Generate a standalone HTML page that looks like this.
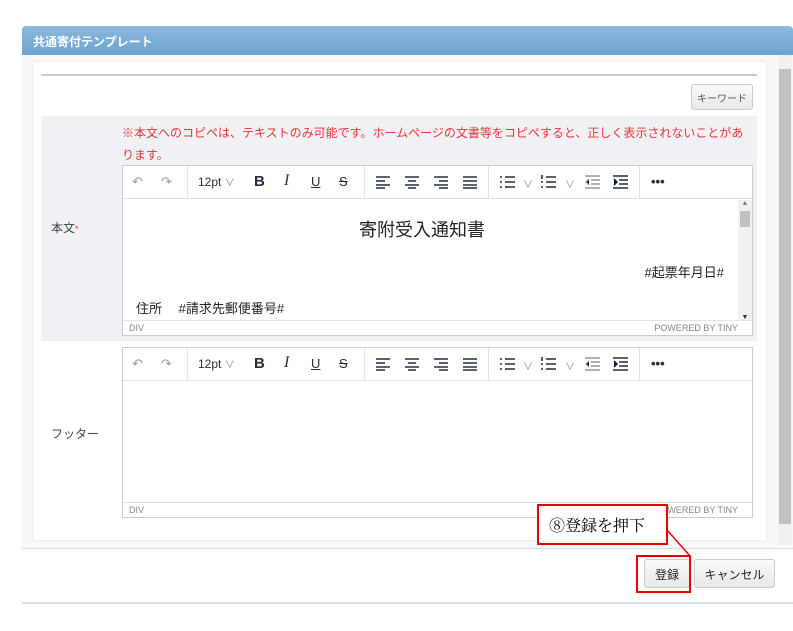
<!DOCTYPE html>
<html><head><meta charset="utf-8"><style>
*{box-sizing:border-box;margin:0;padding:0}
body{width:793px;height:631px;background:#fff;font-family:"Liberation Sans","Noto Sans CJK JP",sans-serif;position:relative;overflow:hidden;color:#222}
.a{position:absolute}
.hdr{left:22px;top:26px;width:771px;height:29px;background:linear-gradient(#8db9dd,#6da3d0);border-radius:4px 4px 0 0;color:#fff;font-size:12px;font-weight:bold;padding:7px 0 0 11px}
.ed{background:#fff;border:1px solid #ccc}
.tb{height:33px;border-bottom:1px solid #e3e3e3;position:relative;font-size:13px;color:#222f3e}
.tb span{position:absolute;top:8px}
.tb svg{position:absolute;top:9px}
.sep{position:absolute;top:0;width:1px;height:33px;background:#e3e3e3}
.st{position:absolute;left:0;right:0;bottom:0;height:15px;border-top:1px solid #e3e3e3;font-size:9px;color:#888;padding:2px 6px}
.st b{font-weight:normal;position:absolute;right:14px;top:2px}
.btn{border:1px solid #ccc;border-radius:3px;background:linear-gradient(#fafafa,#e8e8e8);font-size:12px;text-align:center}
</style></head><body>
<div class="a hdr">共通寄付テンプレート</div>
<div class="a" style="left:22px;top:55px;width:771px;height:493px;background:#f7f8fa"></div>
<div class="a" style="left:33px;top:62px;width:733px;height:478px;background:#fff;box-shadow:0 0 2px #ddd"></div>
<div class="a" style="left:41px;top:74px;width:716px;height:2px;background:#ccc"></div>
<div class="a btn" style="left:691px;top:84px;width:62px;height:26px;padding-top:5px;font-size:10px;color:#555">キーワード</div>
<div class="a" style="left:41px;top:116px;width:716px;height:225px;background:#f0f1f5"></div>
<div class="a" style="left:122px;top:122px;width:630px;font-size:12px;line-height:22px;color:#e33">※本文へのコピペは、テキストのみ可能です。ホームページの文書等をコピペすると、正しく表示されないことがあります。</div>
<div class="a" style="left:51px;top:219px;font-size:12px;color:#444">本文<span style="color:#e33;font-size:9px">*</span></div>
<div class="a" style="left:51px;top:425px;font-size:12px;color:#444">フッター</div>

<div class="a ed" style="left:122px;top:165px;width:631px;height:171px">
<div class="tb" id="tb1">
<span style="left:9px;color:#999">↶</span><span style="left:38px;color:#999">↷</span><div class="sep" style="left:64px"></div>
<span style="left:75px;font-size:12px">12pt <small style="color:#888">∨</small></span>
<span style="left:131px;font-weight:bold;font-size:15px;top:7px">B</span><span style="left:161px;font-style:italic;font-family:'Liberation Serif';font-size:16px;top:6px">I</span><span style="left:188px;text-decoration:underline">U</span><span style="left:216px;text-decoration:line-through">S</span>
<div class="sep" style="left:241px"></div>
<svg style="left:253px" width="14" height="14" stroke="#222f3e" stroke-width="1.6"><path d="M0 2h14M0 6h9M0 10h14M0 13h9"/></svg>
<svg style="left:282px" width="14" height="14" stroke="#222f3e" stroke-width="1.6"><path d="M0 2h14M3 6h8M0 10h14M3 13h8"/></svg>
<svg style="left:311px" width="14" height="14" stroke="#222f3e" stroke-width="1.6"><path d="M0 2h14M5 6h9M0 10h14M5 13h9"/></svg>
<svg style="left:340px" width="14" height="14" stroke="#222f3e" stroke-width="1.6"><path d="M0 2h14M0 6h14M0 10h14M0 13h14"/></svg>
<div class="sep" style="left:365px"></div>
<svg style="left:377px" width="15" height="14" stroke="#222f3e" stroke-width="1.6"><path d="M0 2h2M5 2h10M0 7h2M5 7h10M0 12h2M5 12h10"/></svg>
<span style="left:400px;color:#888;font-size:10px;top:10px">∨</span>
<svg style="left:418px" width="15" height="14" stroke="#222f3e" stroke-width="1.6"><path d="M1 0v4M0 7h2M0 12h2M5 2h10M5 7h10M5 12h10"/></svg>
<span style="left:442px;color:#888;font-size:10px;top:10px">∨</span>
<svg style="left:462px" width="15" height="14" stroke="#999" stroke-width="1.4"><path d="M0 1h15M6 5h9M6 9h9M0 13h15M4 4L1 7l3 3"/></svg>
<svg style="left:490px" width="15" height="14" stroke="#222f3e" stroke-width="1.6"><path d="M0 1h15M6 5h9M6 9h9M0 13h15M1 4l3 3-3 3"/></svg>
<div class="sep" style="left:516px"></div>
<span style="left:528px;font-weight:bold">•••</span>
</div>
<div class="a" style="left:0;top:34px;width:615px;height:121px;overflow:hidden;font-size:13px">
<div style="position:absolute;left:236px;top:16px;font-size:18px">寄附受入通知書</div>
<div style="position:absolute;right:14px;top:62px">#起票年月日#</div>
<div style="position:absolute;left:13px;top:98px">住所　 #請求先郵便番号#</div>
</div>
<div class="a" style="left:615px;top:34px;width:14px;height:121px;background:#f1f1f1"><div style="font-size:7px;color:#777;text-align:center;height:10px">▲</div><div style="margin:1px 2px 0;height:16px;background:#c1c1c1"></div><div style="position:absolute;bottom:0;width:14px;font-size:7px;color:#333;text-align:center">▼</div></div>
<div class="st">DIV<b>POWERED BY TINY</b></div>
</div>

<div class="a ed" style="left:122px;top:347px;width:631px;height:171px">
<div class="tb">
<span style="left:9px;color:#999">↶</span><span style="left:38px;color:#999">↷</span><div class="sep" style="left:64px"></div>
<span style="left:75px;font-size:12px">12pt <small style="color:#888">∨</small></span>
<span style="left:131px;font-weight:bold;font-size:15px;top:7px">B</span><span style="left:161px;font-style:italic;font-family:'Liberation Serif';font-size:16px;top:6px">I</span><span style="left:188px;text-decoration:underline">U</span><span style="left:216px;text-decoration:line-through">S</span>
<div class="sep" style="left:241px"></div>
<svg style="left:253px" width="14" height="14" stroke="#222f3e" stroke-width="1.6"><path d="M0 2h14M0 6h9M0 10h14M0 13h9"/></svg>
<svg style="left:282px" width="14" height="14" stroke="#222f3e" stroke-width="1.6"><path d="M0 2h14M3 6h8M0 10h14M3 13h8"/></svg>
<svg style="left:311px" width="14" height="14" stroke="#222f3e" stroke-width="1.6"><path d="M0 2h14M5 6h9M0 10h14M5 13h9"/></svg>
<svg style="left:340px" width="14" height="14" stroke="#222f3e" stroke-width="1.6"><path d="M0 2h14M0 6h14M0 10h14M0 13h14"/></svg>
<div class="sep" style="left:365px"></div>
<svg style="left:377px" width="15" height="14" stroke="#222f3e" stroke-width="1.6"><path d="M0 2h2M5 2h10M0 7h2M5 7h10M0 12h2M5 12h10"/></svg>
<span style="left:400px;color:#888;font-size:10px;top:10px">∨</span>
<svg style="left:418px" width="15" height="14" stroke="#222f3e" stroke-width="1.6"><path d="M1 0v4M0 7h2M0 12h2M5 2h10M5 7h10M5 12h10"/></svg>
<span style="left:442px;color:#888;font-size:10px;top:10px">∨</span>
<svg style="left:462px" width="15" height="14" stroke="#999" stroke-width="1.4"><path d="M0 1h15M6 5h9M6 9h9M0 13h15M4 4L1 7l3 3"/></svg>
<svg style="left:490px" width="15" height="14" stroke="#222f3e" stroke-width="1.6"><path d="M0 1h15M6 5h9M6 9h9M0 13h15M1 4l3 3-3 3"/></svg>
<div class="sep" style="left:516px"></div>
<span style="left:528px;font-weight:bold">•••</span>
</div>
<div class="st">DIV<b>POWERED BY TINY</b></div>
</div>

<div class="a" style="left:778px;top:55px;width:14px;height:490px;background:#f1f1f1"><div style="margin:14px 1px 0;height:455px;background:#c1c1c1"></div></div>
<div class="a" style="left:22px;top:548px;width:771px;height:1px;background:#dde"></div>
<div class="a" style="left:22px;top:602px;width:771px;height:2px;background:#d6e2ee"></div>
<div class="a btn" style="left:644px;top:559px;width:46px;height:29px;padding-top:6px">登録</div>
<div class="a btn" style="left:694px;top:559px;width:81px;height:29px;padding-top:6px">キャンセル</div>
<div class="a" style="left:636px;top:555px;width:55px;height:38px;border:2px solid #e00"></div>
<div class="a" style="left:537px;top:504px;width:131px;height:41px;border:2px solid #e00;background:#fff;font-family:'Liberation Serif','Noto Serif CJK SC',serif;font-size:16px;padding:7px 0 0 10px;color:#000">⑧登録を押下</div>
<svg class="a" style="left:660px;top:530px" width="40" height="30"><line x1="7" y1="0" x2="30" y2="26" stroke="#e00" stroke-width="1.5"/></svg>
</body></html>
